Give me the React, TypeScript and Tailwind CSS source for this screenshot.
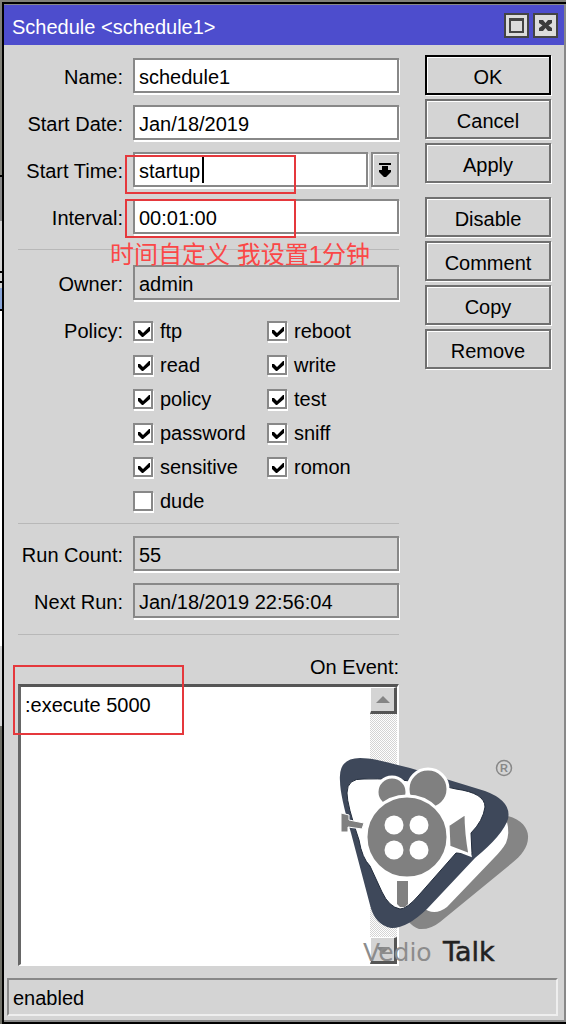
import { useState } from 'react'
import type { ReactNode } from 'react'

const policies = [
  ['ftp', 'reboot'],
  ['read', 'write'],
  ['policy', 'test'],
  ['password', 'sniff'],
  ['sensitive', 'romon'],
  ['dude'],
]

const Row = ({ id, label, children }: { id: string; label: string; children: ReactNode }) => (
  <div className="flex items-center">
    <label htmlFor={id} className="w-[105px] shrink-0 pt-[2px] text-right">
      {label}
    </label>
    <div className="relative ml-[10px] flex min-w-0 flex-1 gap-[3px]">{children}</div>
  </div>
)

const Field = ({ id, value, readOnly }: { id: string; value: string; readOnly?: boolean }) => (
  <input
    id={id}
    type="text"
    defaultValue={value}
    readOnly={readOnly}
    className="h-[35px] w-full min-w-0 flex-1 rounded-none border-2 border-[#888] bg-white px-1 pt-1 shadow-[1px_2px_0_#fff] outline-none read-only:bg-[#d4d4d4]"
  />
)

const Check = ({ name }: { name: string }) => {
  const [on, setOn] = useState(name !== 'dude')
  return (
    <label className="flex items-center gap-[7px]">
      <span className="relative flex size-5 shrink-0">
        <input
          type="checkbox"
          checked={on}
          onChange={() => setOn(!on)}
          className="size-5 appearance-none border-2 border-[#888] bg-white shadow-[1px_2px_0_#fff]"
        />
        {on && (
          <svg viewBox="0 0 20 20" className="pointer-events-none absolute inset-0 size-5">
            <path d="M5 9h2l3 3 6-6h1v4l-7 6H9l-4-4z" fill="#000" />
          </svg>
        )}
      </span>
      <span>{name}</span>
    </label>
  )
}

const ActionButton = ({ children, primary }: { children: ReactNode; primary?: boolean }) => (
  <button
    className={`h-10 w-full border-2 bg-[#d4d4d4] pt-1 shadow-[inset_1px_1px_0_#fff,1px_1px_0_#fff] ${
      primary ? 'border-black' : 'border-[#707070]'
    }`}
  >
    {children}
  </button>
)

const Divider = () => <div className="h-px bg-[#b8b8b8]" />

// Slice of the windows lying behind the dialog
const Backdrop = () => (
  <div className="flex w-[2px] shrink-0 flex-col">
    <div className="h-[173px] bg-[#808078]" />
    <div className="h-[2px] bg-black" />
    <div className="h-[44px] bg-[#888]" />
    <div className="h-[50px] bg-[#d4d4d4]" />
    <div className="h-[2px] bg-black" />
    <div className="h-[8px] bg-[#d4d4d4]" />
    <div className="h-[2px] bg-black" />
    <div className="h-[5px] bg-[#d4d4d4]" />
    <div className="h-[21px] bg-[#89a5d8]" />
    <div className="h-[2px] bg-black" />
    <div className="h-[335px] bg-white" />
    <div className="h-[80px] bg-[#d4d4d4]" />
    <div className="flex-1 bg-[#707068]" />
  </div>
)

const Logo = () => (
  <svg
    viewBox="336 752 200 216"
    className="pointer-events-none absolute right-[28px] bottom-[10px] h-[216px] w-[200px]"
    aria-label="Vedio Talk"
  >
    <path
      d="M502 815C520 817 529 828 528 838C528 847 521 856 512 863L440 922Q430 930 419 929Q413 927 408 921Z"
      fill="#858585"
    />
    <path d="M507 822Q510 833 506 843Q502 850 494 858L447 907Q434 917 422 907Z" fill="#fff" />
    <path
      d="M340 781Q338 758 360 758C375 758 392 764 410 768L485 791Q512 801 508 819Q503 835 475 858L427 909Q406 929 391 928Q375 925 370 905L351 833Q340 795 340 781Z"
      fill="#3e485a"
    />
    <path
      d="M347 793Q347 778 364 779C400 778 430 783 456 789Q485 793 485 807Q483 821 471 833L472 854L456 853L419 895Q407 909 400 909Q389 907 382 892L370 866Q362 858 359 840Q347 805 347 793Z"
      fill="#fff"
      stroke="#222c3c"
      strokeWidth="1"
    />
    <g fill="#808080" stroke="#fff" strokeWidth="3">
      <circle cx="392" cy="792" r="15" />
      <circle cx="428" cy="789" r="20" />
      <circle cx="407" cy="837" r="41" />
      <path d="M466 813L448 825L449 847L470 855Q466 833 466 813Z" />
      <path d="M341 813L349 815L349 820L364 823L362 829L348 827L348 832L341 832Z" strokeWidth="1" />
    </g>
    <g fill="#fff">
      <circle cx="394" cy="825" r="9.500" />
      <circle cx="419" cy="825" r="9.500" />
      <circle cx="394" cy="850" r="9.500" />
      <circle cx="419" cy="850" r="9.500" />
    </g>
    <path d="M397 881h11v23l-3 3h-5l-3-3z" fill="#808080" />
    <circle cx="504" cy="768" r="7.500" fill="none" stroke="#888" strokeWidth="1.500" />
    <text x="504" y="772" textAnchor="middle" fontSize="11" fontWeight="700" fill="#888" className="font-['Liberation_Sans',sans-serif]">
      R
    </text>
    <g className="font-['DejaVu_Sans',sans-serif]">
      <text x="363" y="961" fontSize="25" fill="#8c8c8c">
        Vedio
      </text>
      <text x="443" y="961" fontSize="27" fill="#222" stroke="#222" strokeWidth="0.500">
        Talk
      </text>
    </g>
  </svg>
)

const ScrollButton = ({ down }: { down?: boolean }) => (
  <button
    aria-label={down ? 'Scroll down' : 'Scroll up'}
    className="flex h-[27px] w-full items-center justify-center border-t border-r-3 border-b-3 border-l border-t-white border-r-[#555] border-b-[#555] border-l-white bg-[#d4d4d4]"
  >
    <svg viewBox="0 0 14 8" className="h-2 w-[14px]">
      <path d={down ? 'M0 1h14L7 8z' : 'M0 7h14L7 0z'} fill="#858585" />
    </svg>
  </button>
)

export default function App() {
  return (
    <div className="flex min-h-screen bg-[#808078] pt-[2px] font-['Liberation_Sans',Arial,sans-serif] text-[20px] leading-6 text-black">
      <Backdrop />
      <main className="flex min-w-0 flex-1 flex-col border-t-2 border-b-2 border-l-2 border-black bg-[#d4d4d4]">
        <header className="flex h-[41px] items-center border-t border-r-2 border-[#888] bg-[#4d4dcd] pr-[6px] pl-2 text-white">
          <h1 className="flex-1 pt-1">Schedule &lt;schedule1&gt;</h1>
          <div className="flex gap-1">
            <button
              aria-label="Maximize"
              className="flex size-[25px] items-center justify-center border-2 border-[#444] bg-[#dcdcdc]"
            >
              <span className="size-[15px] border-2 border-t-3 border-[#444]" />
            </button>
            <button
              aria-label="Close"
              className="flex size-[25px] items-center justify-center border-2 border-[#444] bg-[#dcdcdc]"
            >
              <svg viewBox="0 0 13 13" className="size-[13px]">
                <path d="M0 1h4l2.500 3L9 1h4v3L9.500 6.500 13 9v3H9L6.500 9 4 12H0V9l3.500-2.500L0 4z" fill="#3c3c3c" />
              </svg>
            </button>
          </div>
        </header>

        <div className="relative flex flex-1 border-r-2 border-[#888] pr-[13px] pl-[14px]">
          <form className="flex min-w-0 flex-1 flex-col pt-[13px]" onSubmit={(e) => e.preventDefault()}>
            <div className="flex flex-col gap-3">
              <Row id="name" label="Name:">
                <Field id="name" value="schedule1" />
              </Row>
              <Row id="date" label="Start Date:">
                <Field id="date" value="Jan/18/2019" />
              </Row>
              <Row id="time" label="Start Time:">
                <Field id="time" value="startup" />
                <span className="absolute top-[5px] left-[69px] h-[26px] w-[2px] bg-black" />
                <button
                  aria-label="Start time options"
                  className="flex h-[35px] w-7 items-center justify-center border-2 border-[#888] shadow-[inset_1px_1px_0_#fff,1px_2px_0_#fff]"
                >
                  <svg viewBox="0 0 12 14" className="h-[14px] w-3">
                    <path d="M0 0h12v2H0zM3 3h6v4h3v2l-5 5H5L0 9V7h3z" />
                  </svg>
                </button>
                <span className="pointer-events-none absolute top-[3px] -left-2 h-[39px] w-[171px] border-2 border-[#e5383c]" />
              </Row>
              <Row id="interval" label="Interval:">
                <Field id="interval" value="00:01:00" />
                <span className="pointer-events-none absolute top-0 -left-2 h-[39px] w-[171px] border-2 border-[#e5383c]" />
                <span className="pointer-events-none absolute top-[42px] -left-[23px] z-10 font-['Liberation_Sans','Noto_Sans_CJK_SC',sans-serif] text-[24px] leading-7 whitespace-nowrap text-[#fb4747]">
                  时间自定义 我设置1分钟
                </span>
              </Row>
            </div>

            <div className="py-[15px]">
              <Divider />
            </div>
            <Row id="owner" label="Owner:">
              <Field id="owner" value="admin" readOnly />
            </Row>

            <fieldset className="mt-[14px] flex">
              <legend className="float-left h-[34px] w-[105px] pt-[5px] text-right">Policy:</legend>
              <div className="ml-[10px] flex flex-col">
                {policies.map((pair) => (
                  <div key={pair[0]} className="grid h-[34px] grid-cols-[134px_auto] items-center">
                    {pair.map((name) => (
                      <Check key={name} name={name} />
                    ))}
                  </div>
                ))}
              </div>
            </fieldset>

            <div className="pt-[5px] pb-3">
              <Divider />
            </div>
            <div className="flex flex-col gap-3">
              <Row id="count" label="Run Count:">
                <Field id="count" value="55" readOnly />
              </Row>
              <Row id="next" label="Next Run:">
                <Field id="next" value="Jan/18/2019 22:56:04" readOnly />
              </Row>
            </div>
            <div className="py-4">
              <Divider />
            </div>

            <label htmlFor="event" className="mt-1 mb-[5px] text-right">
              On Event:
            </label>
            <div className="relative mb-3 flex min-h-[270px] flex-1 border-t-3 border-r-2 border-b-2 border-l-3 border-t-[#555] border-r-white border-b-white border-l-[#666] bg-white">
              <textarea
                id="event"
                defaultValue=":execute 5000"
                className="min-w-0 flex-1 resize-none px-1 pt-[6px] outline-none"
              />
              <div className="flex w-[27px] flex-col justify-between bg-[conic-gradient(#d4d4d4_25%,#fff_0_50%,#d4d4d4_0_75%,#fff_0)] bg-[length:2px_2px]">
                <ScrollButton />
                <ScrollButton down />
              </div>
              <span className="pointer-events-none absolute -top-[22px] -left-[8px] h-[70px] w-[171px] border-2 border-[#e5383c]" />
            </div>
          </form>

          <div className="ml-[26px] flex w-[126px] shrink-0 flex-col gap-[14px] pt-[10px]">
            <div className="flex flex-col gap-1">
              <ActionButton primary>OK</ActionButton>
              <ActionButton>Cancel</ActionButton>
              <ActionButton>Apply</ActionButton>
            </div>
            <div className="flex flex-col gap-1">
              <ActionButton>Disable</ActionButton>
              <ActionButton>Comment</ActionButton>
              <ActionButton>Copy</ActionButton>
              <ActionButton>Remove</ActionButton>
            </div>
          </div>
          <Logo />
        </div>

        <footer className="border-r-2 border-b-2 border-[#888] pr-[6px] pb-1 pl-[3px]">
          <p className="h-[38px] border-t-2 border-r-2 border-b-2 border-l-2 border-t-[#888] border-r-[#eee] border-b-[#eee] border-l-[#888] pt-[6px] pl-1">
            enabled
          </p>
        </footer>
      </main>
    </div>
  )
}
